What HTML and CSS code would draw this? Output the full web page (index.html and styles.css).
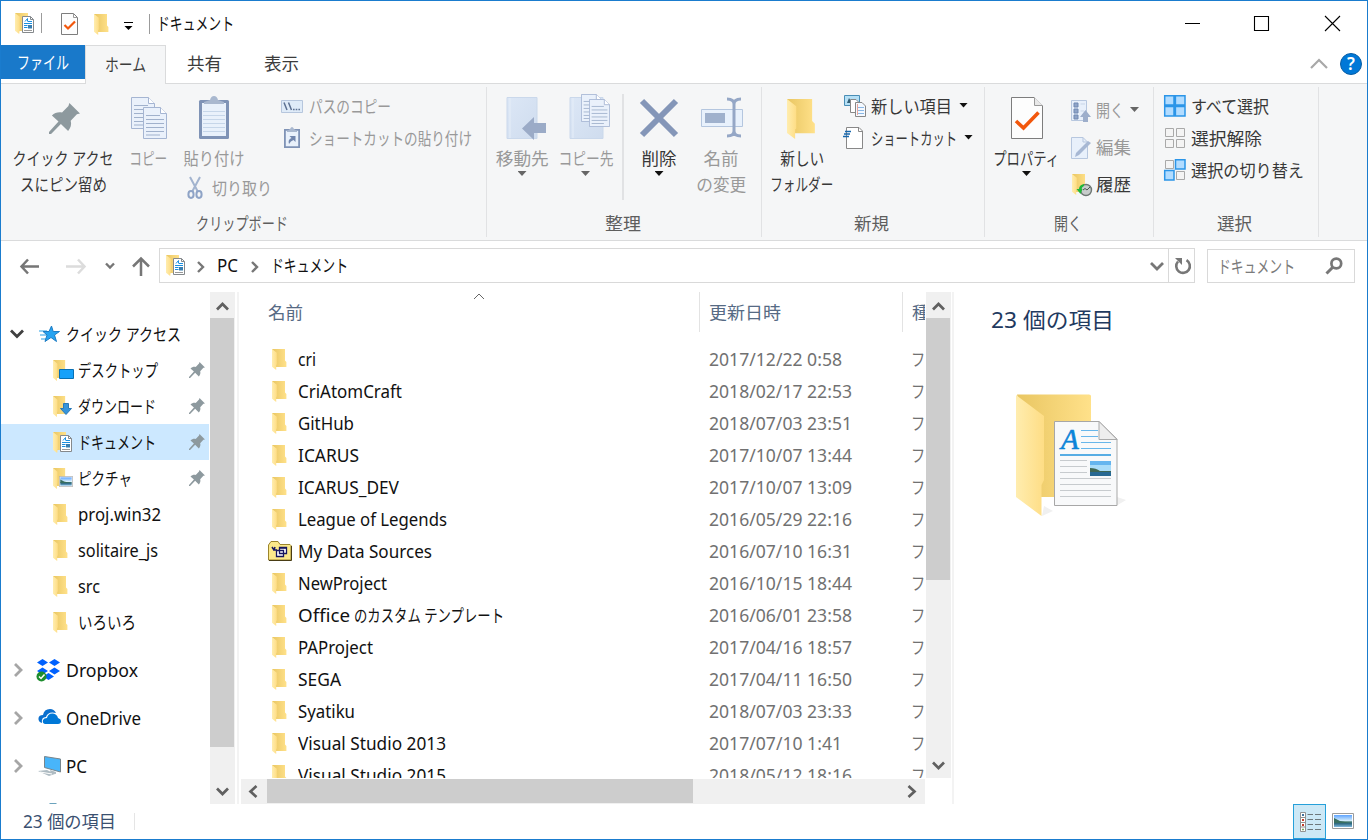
FILE: index.html
```html
<!DOCTYPE html>
<html lang="ja">
<head>
<meta charset="utf-8">
<title>ドキュメント</title>
<link rel="stylesheet" href="styles.css">
</head>
<body>
<svg class="defs" aria-hidden="true">
  <defs>
    <linearGradient id="gBack" x1="0" x2="1"><stop offset="0" stop-color="#e9c662"/><stop offset="1" stop-color="#ffe18a"/></linearGradient>
    <linearGradient id="gFlap" x1="0" x2="1"><stop offset="0" stop-color="#ffedaf"/><stop offset="1" stop-color="#fedd85"/></linearGradient>
    <linearGradient id="gSky" x1="0" x2="0" y1="0" y2="1"><stop offset="0" stop-color="#5fa4ff"/><stop offset=".5" stop-color="#d9f0fb"/><stop offset=".56" stop-color="#477d72"/><stop offset=".72" stop-color="#306a82"/><stop offset="1" stop-color="#7fb8df"/></linearGradient>
    <linearGradient id="gPale" x1="0" x2="1" y2="1"><stop offset="0" stop-color="#dce7f6"/><stop offset="1" stop-color="#cfdcee"/></linearGradient>
  </defs>
  <symbol id="folder" viewBox="0 0 15 21" preserveAspectRatio="none"><path d="M0 0H13V11.5L14.4 13V18H4Z" fill="url(#gBack)"/><path d="M0 0L4.8 3.8V15.5L4.2 16V21L0 17.8Z" fill="url(#gFlap)"/></symbol>
  <symbol id="docfolder" viewBox="0 0 20 21"><path d="M0 0H13V18H4Z" fill="url(#gBack)"/><path d="M0 0L4.8 3.8V16L4.2 21L0 17.8Z" fill="url(#gFlap)"/><path d="M7.500 3.500H15.500L18.500 6.500V19.500H7.500Z" fill="#fff" stroke="#85898c"/><path d="M15.500 3.500V6.500H18.500" fill="none" stroke="#85898c"/><path d="M10 8.500L12.500 5.500V8.500M9 10.500H17M13 8.500H17M9 12.500H12.500M9 14.500H12.500" fill="none" stroke="#1a8fe0"/><path d="M13 12H17V15.500H13Z" fill="#397eaf"/><path d="M9 17.500H17" stroke="#999"/></symbol>
  <symbol id="pin" viewBox="0 0 30 30"><path d="M19.7 0L30 10.2L27 11L21 17.2C22 21 21 24 18.5 27L11.5 20.3L2 30L0 30V28L9.2 18L2.8 12C5.5 9.6 9 8.3 12.6 9.2L18.8 3Z" fill="#8d999e"/></symbol>
  <symbol id="check" viewBox="0 0 32 42"><path d="M.5 .5H23L31.5 9V41.5H.5Z" fill="#fdfdfd" stroke="#7d7d7d"/><path d="M23.5 .5V8.5H31.5" fill="#e8e8e8" stroke="#999"/><path d="M5 24L12.5 31L27.5 15.5" fill="none" stroke="#f2570c" stroke-width="3.6"/></symbol>
  <symbol id="page" viewBox="0 0 24 32"><path d="M.5 .5H17.5L23.5 6.5V31.5H.5Z" fill="#eaf1fb" stroke="#a5b5d2"/><path d="M17.5 .5V6.5H23.5" fill="#fff" stroke="#a5b5d2"/><path d="M3 8.5H17M3 12.5H21M3 16.5H21M3 20.5H21M3 24.5H21M3 28H17" stroke="#a0b1cc"/></symbol>
  <symbol id="photo" viewBox="0 0 22 16" preserveAspectRatio="none"><path d="M.5 .5H21.5V15.5H.5Z" fill="#fff" stroke="#9b9b9b"/><path d="M2 2H20V14H2Z" fill="url(#gSky)"/><path d="M2 5L8 8L18 10H2Z" fill="#386e60"/></symbol>
</svg>

<div class="window">
  <header class="titlebar">
    <svg class="app" width="20" height="21"><use href="#docfolder"/></svg>
    <i class="rule first"></i>
    <svg class="q1" width="17" height="22" viewBox="0 0 17 22"><path d="M.5 .5H12.500L16.500 4.500V21.500H.5Z" fill="#fdfdfd" stroke="#7d7d7d"/><path d="M12.500 .5V4.500H16.500" fill="none" stroke="#999"/><path d="M3.500 12L7 15.500L14 8.500" fill="none" stroke="#f2570c" stroke-width="2.200"/></svg>
    <svg class="q2" width="15" height="21"><use href="#folder"/></svg>
    <svg class="q3" width="9" height="9" viewBox="0 0 9 9"><path d="M0 .5H9" stroke="#000"/><path d="M.5 4H8.5L4.5 8Z"/></svg>
    <i class="rule second"></i>
    <span class="fit" data-w="77">ドキュメント</span>
    <svg class="controls" width="160" height="20" viewBox="0 0 160 20"><path d="M3 10.5H18M72.5 3.5H86.5V17.5H72.5ZM143 3L158 18M158 3L143 18" fill="none" stroke="#000" stroke-width="1.1"/></svg>
  </header>

  <nav class="tabs">
    <div class="tab file"><span class="fit" data-w="52">ファイル</span></div>
    <div class="tab home"><span class="fit" data-w="41">ホーム</span></div>
    <div class="tab share"><span class="fit" data-w="35">共有</span></div>
    <div class="tab view"><span class="fit" data-w="35">表示</span></div>
    <svg class="collapse" width="18" height="12" viewBox="0 0 18 12"><path d="M1 10L9 2L17 10" fill="none" stroke="#a8a8a8" stroke-width="2.2"/></svg>
    <div class="help">?</div>
  </nav>

  <section class="ribbon">
    <div class="group clipboard">
      <div class="cells">
        <div class="big c1"><svg viewBox="0 0 48 48"><use href="#pin" x="9" y="7" width="31" height="31"/></svg>
          <span class="fit" data-w="101">クイック アクセ</span><span class="fit" data-w="87">スにピン留め</span></div>
        <div class="big c2 off"><svg viewBox="0 0 48 48"><use href="#page" x="7" y="1" width="24" height="32"/><use href="#page" x="19" y="11" width="24" height="32"/></svg><span class="fit" data-w="38">コピー</span></div>
        <div class="c3 off">
          <div class="big"><svg viewBox="0 0 48 48"><rect x="9" y="4" width="30" height="39" rx="1.5" fill="#7f93b6"/><path d="M12 7H36V40H12Z" fill="#e9f1fb"/><path d="M13 15.5H35M13 19.5H35M13 23.5H35M13 27.5H35M13 31.5H35M13 35.5H35" stroke="#c6d6e9"/><path d="M14 8V6L20 4Q21 0 24 0Q27 0 28 4L34 6V8Z" fill="#a9b8cf"/></svg><span class="fit" data-w="61">貼り付け</span></div>
          <div class="cut"><svg width="16" height="22" viewBox="0 0 16 22"><path d="M3 0L10.500 14M13 0L5.500 14" stroke="#a3b4cf" stroke-width="2"/><ellipse cx="4" cy="17.500" rx="2.600" ry="3.400" fill="none" stroke="#8ea3c6" stroke-width="2"/><ellipse cx="12" cy="17.500" rx="2.600" ry="3.400" fill="none" stroke="#8ea3c6" stroke-width="2"/></svg><span class="fit" data-w="60">切り取り</span></div>
        </div>
        <div class="stack off">
          <div class="small"><svg width="24" height="24" viewBox="0 0 24 24"><path d="M1.5 6.5H22.5V18.5H1.5Z" fill="#dfebf8" stroke="#b6c6dd"/><path d="M4 8.5L7 16M8.5 8.5L11.5 16" stroke="#5d7192" stroke-width="1.5"/><path d="M13 15.5H20" stroke="#5d7192" stroke-width="1.6" stroke-dasharray="1.6 1.1"/></svg><span class="fit" data-w="82">パスのコピー</span></div>
          <div class="small"><svg width="24" height="24" viewBox="0 0 24 24"><path d="M4.9 3.900H19.1V21.1H4.9Z" fill="#e9f1fb" stroke="#7f93b6" stroke-width="1.8"/><path d="M7 5L10 3Q12-1 14 3L17 5V6H7Z" fill="#a9b8cf"/><path d="M9 18Q7.500 13.500 11.500 12L9.500 10H15.500V16L13.500 14Q10.500 15 9 18Z" fill="#7186ad"/></svg><span class="fit" data-w="163">ショートカットの貼り付け</span></div>
        </div>
      </div>
      <div class="caption"><span class="fit" data-w="92">クリップボード</span></div>
    </div>

    <div class="group organize">
      <div class="cells">
        <div class="big move off"><svg viewBox="0 0 48 48"><path d="M9 1.5H39V42.5H9Z" fill="url(#gPale)" stroke="#cad8eb"/><path d="M12 2V42" stroke="#e6eef8"/><path d="M24 32.5L36 21V27H48V37H36V44Z" fill="#9babc7"/></svg><span class="fit" data-w="53">移動先</span><b class="arrow"></b></div>
        <div class="big copyto off"><svg viewBox="0 0 48 48"><path d="M8 1.5H41V42.5H8Z" fill="url(#gPale)" stroke="#cad8eb"/><path d="M11 2V42" stroke="#e6eef8"/><use href="#page" x="19" y="-2" width="21" height="28"/><use href="#page" x="27" y="3" width="21" height="28"/></svg><span class="fit" data-w="55">コピー先</span><b class="arrow"></b></div>
        <i class="split"></i>
        <div class="big delete"><svg viewBox="0 0 48 48"><path d="M7 5L41 39M41 5L7 39" stroke="#8496b8" stroke-width="6"/></svg><span class="fit" data-w="35">削除</span><b class="arrow"></b></div>
        <div class="big rename off"><svg viewBox="0 0 48 48"><path d="M4.5 13.5H45.5V30.5H4.5Z" fill="#e8f1fc" stroke="#b4c6df"/><path d="M8 17H28V27H8Z" fill="#9fb1cd"/><path d="M37 4V40M30 3Q37 3 37 8Q37 3 44 3M30 40Q37 40 37 35Q37 40 44 40" fill="none" stroke="#95a7c6" stroke-width="3"/></svg><span class="fit" data-w="35">名前</span><span class="fit" data-w="50">の変更</span></div>
      </div>
      <div class="caption"><span class="fit" data-w="36">整理</span></div>
    </div>

    <div class="group new">
      <div class="cells">
        <div class="big newfolder"><svg viewBox="0 0 48 48"><use href="#folder" x="9" y="3" width="29" height="40"/></svg><span class="fit" data-w="44">新しい</span><span class="fit" data-w="63">フォルダー</span></div>
        <div class="stack">
          <div class="small"><svg width="24" height="24" viewBox="0 0 24 24"><path d="M1.5 1.5H16.5V11.5H1.5Z" fill="#b5e0f6" stroke="#4a8eb6"/><path d="M4 9L6 4L9 9Z" fill="#315d75"/><path d="M7.5 5.5H13L15.5 8V18.5H7.5Z" fill="#fff" stroke="#888"/><path d="M12.5 8.5H19L22.5 12V22.5H12.5Z" fill="#f4f9ff" stroke="#888"/><path d="M14 13.5H21M14 16.5H21M14 19.5H21" stroke="#8ab7e5"/><path d="M14.5 10V21" stroke="#e8a69a"/></svg><span class="fit" data-w="81">新しい項目</span><b class="arrow"></b></div>
          <div class="small"><svg width="24" height="24" viewBox="0 0 24 24"><path d="M3.5 1.5H16L19.5 5V22.5H3.5Z" fill="#fff" stroke="#888"/><path d="M15.5 1.5V5.5H19.5" fill="none" stroke="#888"/><path d="M2 5.500H8M1 8H7M0 10.500H6" stroke="#1566ac" stroke-width="1.4"/></svg><span class="fit" data-w="86">ショートカット</span><b class="arrow"></b></div>
        </div>
      </div>
      <div class="caption"><span class="fit" data-w="35">新規</span></div>
    </div>

    <div class="group open">
      <div class="cells">
        <div class="big props"><svg viewBox="0 0 48 48"><use href="#check" x="8" y="1" width="32" height="42"/></svg><span class="fit" data-w="66">プロパティ</span><b class="arrow"></b></div>
        <div class="stack">
          <div class="small off"><svg width="22" height="24" viewBox="0 0 22 24"><path d="M1.5 1.5H16.5V21.5H1.5Z" fill="#e8f0fb" stroke="#b7c7df"/><path d="M4 4H8V8H4ZM4 10H8V14H4ZM4 16H8V20H4Z" fill="#8fa4c8" stroke="#7189b2"/><path d="M10.5 5H15M10.5 12H14" stroke="#c8d5e7"/><path d="M15.5 11L21 18H18V23H13V18H10Z" fill="#9daecb"/></svg><span class="fit" data-w="28">開く</span><b class="arrow"></b></div>
          <div class="small off"><svg width="22" height="24" viewBox="0 0 22 24"><path d="M1.5 1.5H13L17.5 6V22.5H1.5Z" fill="#e8f0fb" stroke="#b7c7df"/><path d="M13 1.5V6H17.5" fill="none" stroke="#b7c7df"/><path d="M5 21L6 17L18 5L21 7L9 19Z" fill="#a7b8d4"/></svg><span class="fit" data-w="35">編集</span></div>
          <div class="small"><svg width="22" height="24" viewBox="0 0 22 24"><use href="#folder" x="2" y="1" width="15" height="21"/><circle cx="16" cy="17" r="5.500" fill="#c7cccb" stroke="#6e7774" stroke-width="1.4"/><path d="M13 17L15 15.5L17 17L20 14" fill="none" stroke="#4d5551"/><path d="M14 11Q9 12 9 16H6.500L10.500 21L12.500 16H11.500Q12 13.500 14 13Z" fill="#21b738"/></svg><span class="fit" data-w="35">履歴</span></div>
        </div>
      </div>
      <div class="caption"><span class="fit" data-w="28">開く</span></div>
    </div>

    <div class="group select">
      <div class="cells">
        <div class="stack">
          <div class="small"><svg width="24" height="24" viewBox="0 0 24 24"><path d="M1.7 1.7H11V11H1.7ZM12.4 1.7H22V11H12.4ZM1.7 12.4H11V22H1.7ZM12.4 12.4H22V22H12.4Z" fill="#b2dcff" stroke="#2b95e8" stroke-width="1.5"/></svg><span class="fit" data-w="78">すべて選択</span></div>
          <div class="small"><svg width="24" height="24" viewBox="0 0 24 24"><path d="M2.5 2.5H10.5V10.5H2.5ZM13.5 2.5H21.5V10.5H13.5ZM2.5 13.5H10.5V21.5H2.5ZM13.5 13.5H21.5V21.5H13.5Z" fill="#f4f4f4" stroke="#a9a9a9"/></svg><span class="fit" data-w="71">選択解除</span></div>
          <div class="small"><svg width="24" height="24" viewBox="0 0 24 24"><path d="M2.5 2.5H10.5V10.5H2.5ZM13.5 13.5H21.5V21.5H13.5Z" fill="#f4f4f4" stroke="#a9a9a9"/><path d="M12.5 1.7H22V11H12.5ZM1.7 12.5H11V22H1.7Z" fill="#b2dcff" stroke="#2b95e8" stroke-width="1.5"/></svg><span class="fit" data-w="113">選択の切り替え</span></div>
        </div>
      </div>
      <div class="caption"><span class="fit" data-w="35">選択</span></div>
    </div>
  </section>

  <div class="location">
    <svg class="arrows" width="150" height="34" viewBox="0 0 150 34"><g fill="none" stroke="#767676" stroke-width="2.5"><path d="M21 18.500H39M28 11.500L21.500 18.500L28 25.500"/><path d="M66 18.500H84.500M78 11.500L84.500 18.500L78 25.500" stroke="#dcdcdc"/><path d="M106 15.500L110 19.500L114 15.500" stroke-width="2.4"/><path d="M141 28V11M133 18.500L141 10.500L149 18.500"/></g></svg>
    <div class="address">
      <svg class="aicon" width="20" height="21"><use href="#docfolder"/></svg>
      <svg class="chev s1" width="8" height="12" viewBox="0 0 8 12"><path d="M1 1L6 6L1 11" fill="none" stroke="#777" stroke-width="2.4"/></svg>
      <span class="fit" data-w="21">PC</span>
      <svg class="chev s2" width="8" height="12" viewBox="0 0 8 12"><path d="M1 1L6 6L1 11" fill="none" stroke="#777" stroke-width="2.4"/></svg>
      <span class="fit" data-w="77">ドキュメント</span>
      <svg class="drop" width="14" height="10" viewBox="0 0 14 10"><path d="M1 2L7 8L13 2" fill="none" stroke="#777" stroke-width="2.8"/></svg>
      <div class="reload"><svg width="18" height="18" viewBox="0 0 18 18"><path d="M12.500 3.200A6.800 6.800 0 1 1 4 4.500" fill="none" stroke="#777" stroke-width="2.6"/><path d="M1 1H8V8Z" fill="#777"/></svg></div>
    </div>
    <div class="search"><span class="fit" data-w="77">ドキュメント</span><svg width="18" height="18" viewBox="0 0 18 18"><circle cx="11.300" cy="6.500" r="4.900" fill="none" stroke="#777" stroke-width="2.700"/><path d="M8 10L1.500 16.500" stroke="#777" stroke-width="3"/></svg></div>
  </div>

  <main class="body">
    <aside class="tree">
      <div class="node root"><svg class="tw" width="14" height="10" viewBox="0 0 14 10"><path d="M1 1.500L7 7.500L13 1.500" fill="none" stroke="#404040" stroke-width="2.800"/></svg>
        <svg class="ni" width="24" height="20" viewBox="0 0 24 20"><path d="M0 7H8M1 11H7M2 15H7" stroke="#72c1ef" stroke-width="1.3"/><path d="M12.500 2L14.200 7.500H20.500L15.500 11L17.500 17.500L12 13.500L6 17.500L8 11L4 7.500H10Z" fill="#25a3f1" stroke="#1c7cc4"/></svg><span class="fit" data-w="115">クイック アクセス</span></div>
      <div class="node child"><svg class="ni" width="24" height="22" viewBox="0 0 24 22"><use href="#folder" x="0" y="0" width="14" height="21"/><path d="M6.500 9.500H20.500V18.500H6.500Z" fill="#16a1fa" stroke="#0870b4"/></svg><span class="fit" data-w="80">デスクトップ</span><svg class="pn" width="16" height="16"><use href="#pin"/></svg></div>
      <div class="node child"><svg class="ni" width="24" height="22" viewBox="0 0 24 22"><use href="#folder" x="0" y="0" width="14" height="21"/><path d="M10.500 7.500H15.500V12.500H18.500L13 18.500L7.500 12.500H10.500Z" fill="#3694db" stroke="#2979b7"/></svg><span class="fit" data-w="78">ダウンロード</span><svg class="pn" width="16" height="16"><use href="#pin"/></svg></div>
      <div class="node child current"><svg class="ni" width="24" height="22" viewBox="0 0 24 22"><use href="#docfolder" width="20" height="21"/></svg><span class="fit" data-w="78">ドキュメント</span><svg class="pn" width="16" height="16"><use href="#pin"/></svg></div>
      <div class="node child"><svg class="ni" width="24" height="22" viewBox="0 0 24 22"><use href="#folder" x="0" y="0" width="14" height="21"/><use href="#photo" x="6" y="8" width="14" height="11"/></svg><span class="fit" data-w="54">ピクチャ</span><svg class="pn" width="16" height="16"><use href="#pin"/></svg></div>
      <div class="node child"><svg class="ni" width="24" height="22"><use href="#folder" width="15" height="21"/></svg><span class="fit" data-w="83">proj.win32</span></div>
      <div class="node child"><svg class="ni" width="24" height="22"><use href="#folder" width="15" height="21"/></svg><span class="fit" data-w="80">solitaire_js</span></div>
      <div class="node child"><svg class="ni" width="24" height="22"><use href="#folder" width="15" height="21"/></svg><span class="fit" data-w="22">src</span></div>
      <div class="node child"><svg class="ni" width="24" height="22"><use href="#folder" width="15" height="21"/></svg><span class="fit" data-w="58">いろいろ</span></div>
      <div class="node root drive"><svg class="tw" width="14" height="14" viewBox="0 0 14 14"><path d="M2 1L8 7L2 13" fill="none" stroke="#a6a6a6" stroke-width="2.800"/></svg><svg class="ni" width="26" height="24" viewBox="0 0 26 24"><path d="M6.500 1L12 4.500L6.500 8L1 4.500ZM18.500 1L24 4.500L18.500 8L13 4.500ZM6.500 9.500L12 13L6.500 16.500L1 13ZM18.500 9.500L24 13L18.500 16.500L13 13ZM12.500 15L18 18.500L12.500 22L7 18.500Z" fill="#0061fe"/><circle cx="5.500" cy="18.500" r="5" fill="#1e8d2e"/><path d="M3 18.500L5 20.500L8.500 16.500" stroke="#fff" fill="none" stroke-width="1.500"/></svg><span class="fit" data-w="72">Dropbox</span></div>
      <div class="node root drive"><svg class="tw" width="14" height="14" viewBox="0 0 14 14"><path d="M2 1L8 7L2 13" fill="none" stroke="#a6a6a6" stroke-width="2.800"/></svg><svg class="ni" width="26" height="24" viewBox="0 0 26 24"><path d="M6 17Q2 16 2.500 12Q3 9 7 9Q8 3 14 3Q18 3 20 7Q12 5 10 11Q5 11 6 17Z" fill="#0a6fce"/><path d="M9 18Q6 17 7 14Q8 12 11 12Q12 7 17 7.500Q21 8 22 12Q25 13 25 15Q25 18 22 18Z" fill="#0078d7"/></svg><span class="fit" data-w="75">OneDrive</span></div>
      <div class="node root drive"><svg class="tw" width="14" height="14" viewBox="0 0 14 14"><path d="M2 1L8 7L2 13" fill="none" stroke="#a6a6a6" stroke-width="2.800"/></svg><svg class="ni" width="26" height="24" viewBox="0 0 26 24"><path d="M8.500 2.500L24.500 5V18L8.500 13.500Z" fill="#48b5fa" stroke="#77858d"/><path d="M14 16L20 18V20L15 19ZM2 17L11 16L19 20L13 22Z" fill="#aebbc2"/><path d="M4 18L16 20" stroke="#fff"/></svg><span class="fit" data-w="21">PC</span></div>
      <div class="node root drive more"><svg class="ni" width="26" height="24" viewBox="0 0 26 24"><path d="M12 1H18L20 3H10Z" fill="#6ba3bd"/></svg></div>
    </aside>
    <div class="vbar treebar"><svg class="up" viewBox="0 0 25 26"><path d="M7 17.500L12.500 12L18 17.500" /></svg><div class="thumb"></div><svg class="down" viewBox="0 0 25 26"><path d="M7 10.500L12.500 16L18 10.500"/></svg></div>
    <i class="divider d1"></i>
    <section class="files">
      <div class="pane">
        <div class="listing">
          <div class="cols"><span class="col name"><span class="fit" data-w="35">名前</span><svg class="sort" width="12" height="7" viewBox="0 0 12 7"><path d="M1 6L6 1L11 6" fill="none" stroke="#666"/></svg></span><span class="col date"><span class="fit" data-w="72">更新日時</span></span><span class="col kind"><span class="fit" data-w="35">種類</span></span></div>
          <div class="rows"></div>
        </div>
        <div class="vbar filebar"><svg class="up" viewBox="0 0 25 26"><path d="M7 17.500L12.500 12L18 17.500"/></svg><div class="thumb"></div><svg class="down" viewBox="0 0 25 26"><path d="M7 10.500L12.500 16L18 10.500"/></svg></div>
      </div>
      <div class="hbar"><svg viewBox="0 0 26 25"><path d="M15.500 7L9.500 12.500L15.500 18"/></svg><div class="thumb"></div><svg class="right" viewBox="0 0 26 25"><path d="M9.500 7L15.500 12.500L9.500 18"/></svg></div>
    </section>
    <i class="divider d2"></i>
    <section class="preview">
      <div class="count"><span class="fit" data-w="123">23 個の項目</span></div>
      <svg class="art" width="115" height="126" viewBox="0 0 115 126">
        <path d="M26 122L37 117L28 112ZM100 112L110 106L101 103Z" fill="#f0f0f0"/>
        <path d="M1 .5H73Q75 .5 75 2V103H24Z" fill="url(#gBack)"/><path d="M0 1L28 22V86L25.500 91V122L0 103Z" fill="url(#gFlap)"/>
        <path d="M38.500 27.500H83L101 45V111.500H38.500Z" fill="#f8f9fa" stroke="#a7a7a7"/><path d="M83 27.500V45.500H101Z" fill="#eee" stroke="#aaa"/>
        <text x="45" y="54.500" class="letter">A</text>
        <path d="M65 36.500H82M65 42.500H82M65 48.500H95M65 54.500H95" stroke="#67b6ea"/><path d="M44 61H95" stroke="#2293dc" stroke-width="1.600"/>
        <path d="M44 66.500H71M44 72.500H71M44 78.500H71M44 84.500H95M44 90.500H95M44 96.500H95M44 102.500H95" stroke="#c7cbce"/>
        <path d="M74 67H95V82H74Z" fill="#a9dcf9"/><path d="M74 67H95V71H74Z" fill="#65b5ef"/><path d="M74 74Q80 74 84 77L95 77V79H74Z" fill="#3e6653"/><path d="M74 78H95V82H74Z" fill="#286993"/>
      </svg>
    </section>
  </main>

  <footer class="status"><span class="fit" data-w="93">23 個の項目</span><i class="mark"></i>
    <div class="view on"><svg width="22" height="22" viewBox="0 0 22 22"><path d="M.5 1.500H5.500V20.500H.5ZM.5 6.500H5.500M.5 11.500H5.500M.5 16H5.500" fill="#fff" stroke="#929292"/><path d="M2 4H4" stroke="#3f719e" stroke-width="2"/><path d="M2 9H4M2 14H4" stroke="#c43b27" stroke-width="2"/><path d="M2 18.500H4" stroke="#78a65d" stroke-width="1.500"/><path d="M7.500 3.500H13M15 3.500H21M7.500 8.500H13M15 8.500H21M7.500 13.500H13M15 13.500H21M7.500 18.500H13M15 18.500H21" stroke="#6d777b"/></svg></div>
    <svg class="thumbs" width="22" height="16"><use href="#photo"/></svg>
  </footer>
</div>
<script src="app.js"></script>
</body>
</html>
```

FILE: styles.css
```css
* { box-sizing: border-box; }
body { margin: 0; background: #fff; color: #111; font: 17.5px/26px "Noto Sans", "Noto Sans CJK JP", sans-serif; overflow: hidden; }
svg { display: block; flex: none; overflow: visible; }
.defs { position: absolute; width: 0; height: 0; }
.fit { display: inline-block; white-space: nowrap; transform-origin: 0 50%; flex: none; }
.window { width: 1368px; height: 840px; border: 1px solid #1a7cce; display: flex; flex-direction: column; }

.titlebar { height: 44px; display: flex; align-items: center; padding-left: 14px; flex: none; }
.rule { width: 1px; height: 20px; background: #9b9b9b; }
.rule.first { margin-left: 6px; }
.q1 { margin: 2px 0 0 19px; }
.q2 { margin: 2px 0 0 16px; }
.q3 { margin: 7px 0 0 15px; }
.rule.second { margin: 2px 7px 0 16px; }
.controls { margin: -1px 25px 0 auto; }

.tabs { height: 39px; display: flex; flex: none; border-bottom: 1px solid #dadbdc; line-height: 37px; color: #3c3c3c; }
.tab.file { width: 84px; height: 34px; background: #1979ca; color: #fff; padding-left: 16px; line-height: 35px; }
.tab.home { width: 81px; height: 39px; background: #f5f6f7; border: 1px solid #dadbdc; border-bottom: 0; padding-left: 19px; line-height: 36px; }
.tab.share { padding-left: 21px; }
.tab.view { padding-left: 42px; }
.collapse { margin: 13px 0 0 auto; }
.help { width: 22px; height: 22px; border-radius: 50%; background: #0078d7; border: 1px solid #075da5; color: #fff; margin: 8px 5px 0 12px; text-align: center; line-height: 20px; font-size: 17px; font-weight: 600; }

.ribbon { height: 157px; background: #f5f6f7; border-bottom: 1px solid #dadbdc; display: flex; padding: 3px 0; flex: none; color: #383838; }
.group { height: 150px; border-right: 1px solid #e1e2e4; flex: none; }
.cells { height: 124px; display: flex; }
.caption { text-align: center; color: #5e5e5e; padding-right: 3px; line-height: 25px; }
.clipboard { width: 486px; }
.organize { width: 275px; }
.new { width: 223px; }
.open { width: 169px; }
.select { width: 165px; }
.big { display: flex; flex-direction: column; align-items: center; padding-top: 9px; flex: none; }
.big > svg { width: 48px; height: 48px; margin-bottom: 1px; }
.off { color: #999; }
.arrow { width: 9px; height: 5px; background: #111; clip-path: polygon(0 0, 100% 0, 50% 100%); flex: none; }
.off .arrow { background: #666; }
.c1 { width: 125px; }
.c2 { width: 44px; }
.c3 { width: 110px; }
.c3 .big { width: 87px; }
.cut { display: flex; align-items: center; gap: 9px; padding-left: 17px; margin-top: 4px; }
.stack { display: flex; flex-direction: column; padding-top: 3px; }
.small { height: 32px; display: flex; align-items: center; gap: 4px; line-height: 26px; }
.small .fit { margin-top: -1px; }
.clipboard .small { gap: 5px; }
.small .arrow { margin-left: 3px; margin-bottom: 2px; }
.move { width: 70px; }
.copyto { width: 55px; margin-left: 1px; }
.split { width: 2px; height: 106px; margin: 7px 0 0 9px; background: #e1e2e4; }
.delete { width: 70px; }
.rename { width: 54px; }
.newfolder { width: 80px; }
.new .stack { padding-left: 1px; }
.props { width: 83px; }
.open .stack { padding: 5px 0 0 2px; }
.open .small { height: 37px; gap: 4px; }
.open .small .arrow { margin-left: 2px; }
.select .stack { padding-left: 9px; }

.location { height: 51px; display: flex; padding-top: 7px; flex: none; }
.arrows { margin-left: -1px; margin-right: 9px; }
.address { width: 1036px; height: 35px; border: 1px solid #d9d9d9; display: flex; align-items: center; padding-left: 6px; flex: none; }
.address .fit { margin-top: -1px; }
.s1 { margin: 2px 12px 0 11px; }
.s2 { margin: 2px 12px 0 13px; }
.drop { margin-left: auto; margin-right: 4px; }
.reload { width: 26px; height: 33px; border-left: 1px solid #d9d9d9; padding: 8px 0 0 5px; }
.search { width: 148px; height: 34px; border: 1px solid #d9d9d9; margin: 1px 0 0 12px; display: flex; align-items: center; justify-content: space-between; padding: 0 11px 0 10px; color: #7b7b7b; }

.body { height: 512px; display: flex; flex: none; }
.tree { width: 208px; height: 512px; overflow: hidden; padding-top: 24px; flex: none; }
.node { height: 36px; display: flex; align-items: center; padding-left: 9px; }
.node .tw { width: 14px; margin-right: 15px; }
.node .ni { margin-right: 1px; }
.root .ni { width: 24px; margin-right: 3px; }
.child { padding-left: 52px; }
.child .ni { margin-top: 1px; }
.child.current { background: #cce8ff; }
.pn { margin: 0 4px 0 auto; }
.drive { margin-top: 12px; }
.drive .tw { margin-right: 9px; margin-left: 3px; }
.drive .ni { width: 26px; margin-right: 4px; }
.more { padding-left: 37px; }

.vbar { width: 25px; background: #f0f0f0; display: flex; flex-direction: column; flex: none; }
.vbar svg { width: 25px; height: 26px; }
.vbar path, .hbar path { fill: none; stroke: #606060; stroke-width: 2.7; }
.vbar .down { margin-top: auto; }
.thumb { background: #cdcdcd; flex: none; }
.vbar .thumb { width: 24px; }
.treebar { margin-left: 1px; height: 512px; }
.treebar .thumb { height: 429px; }
.divider { width: 2px; height: 512px; background: #f3f3f3; flex: none; }
.d1 { margin: 0 2px; }
.d2 { margin-left: 1px; }
.files { width: 710px; height: 512px; flex: none; }
.pane { height: 486px; display: flex; }
.listing { width: 684px; height: 486px; overflow: hidden; margin-right: 1px; flex: none; }
.cols { display: flex; height: 40px; color: #566a84; }
.col { border-right: 1px solid #e3e3e3; height: 40px; line-height: 41px; flex: none; position: relative; }
.col.name { width: 459px; padding-left: 27px; }
.sort { position: absolute; left: 232px; top: 1px; }
.col.date { width: 203px; padding-left: 9px; }
.col.kind { width: 50px; padding-left: 9px; border: 0; }
.rows { padding-top: 11px; }
.row { display: flex; height: 32px; align-items: center; color: #717171; }
.row .icon { width: 57px; padding-left: 31px; flex: none; }
.row .icon.data { padding-left: 27px; }
.row .title { width: 411px; color: #111; flex: none; line-height: 32px; display: flex; gap: 4px; }
.row .when { width: 202px; flex: none; line-height: 32px; }
.row .kind-name { line-height: 32px; }
.filebar { height: 486px; }
.filebar .thumb { height: 262px; }
.hbar { width: 684px; height: 25px; margin-top: 1px; background: #f0f0f0; display: flex; }
.hbar svg { width: 26px; height: 25px; }
.hbar .thumb { width: 426px; height: 24px; }
.hbar .right { margin-left: auto; }
.preview { padding: 14px 0 0 37px; color: #1f3a5f; }
.count { font-size: 22px; line-height: 26px; }
.art { margin: 62px 0 0 25px; }
.letter { font: italic 400 29px "Liberation Serif", serif; fill: #0b84d8; stroke: #0b84d8; stroke-width: .6px; }

.status { height: 34px; display: flex; align-items: center; padding-left: 22px; color: #3a5070; flex: none; }
.mark { width: 1px; height: 17px; background: #e5e5e5; margin-left: 18px; }
.view.on { width: 33px; height: 35px; background: #cce8f6; border: 1px solid #26a0da; margin-left: auto; padding: 6px 0 0 6px; }
.thumbs { margin: 0 13px 0 6px; }
```

FILE: app.js
```js
const files = [
  ["cri", 18, "2017/12/22 0:58", 133],
  ["CriAtomCraft", 104, "2018/02/17 22:53", 143],
  ["GitHub", 56, "2018/07/03 23:51", 143],
  ["ICARUS", 61, "2017/10/07 13:44", 143],
  ["ICARUS_DEV", 101, "2017/10/07 13:09", 143],
  ["League of Legends", 149, "2016/05/29 22:16", 143],
  ["My Data Sources", 134, "2016/07/10 16:31", 143],
  ["NewProject", 89, "2016/10/15 18:44", 143],
  ["Office|のカスタム テンプレート", "52|150", "2016/06/01 23:58", 143],
  ["PAProject", 75, "2017/04/16 18:57", 143],
  ["SEGA", 43, "2017/04/11 16:50", 143],
  ["Syatiku", 57, "2018/07/03 23:33", 143],
  ["Visual Studio 2013", 148, "2017/07/10 1:41", 133],
  ["Visual Studio 2015", 148, "2018/05/12 18:16", 143]
];

const folderIcon = '<span class="icon"><svg width="15" height="21"><use href="#folder"/></svg></span>';
const dataIcon = '<span class="icon data"><svg width="24" height="21" viewBox="0 0 24 21"><path d="M.5 19V4L3 .5H10L12 3.500H22L23 4.500V19Z" fill="#fbe98a" stroke="#9c852c"/><path d="M1 19.500H23.500V5" fill="none" stroke="#493c14"/><path d="M8.500 9.500H15.500V15.500H8.500ZM11.500 6.500H18.500V12.500H11.500Z" fill="#fff" stroke="#17175f" stroke-width="1.300"/><path d="M11 7H19M4 6L6 9M7 6L6 9H9" fill="none" stroke="#17175f" stroke-width="1.500"/></svg></span>';

// A name in mixed scripts is split at "|", with one width for each part.
const title = (name, widths) => {
  const parts = String(widths).split("|");
  return name.split("|").map((text, i) => `<span class="fit" data-w="${parts[i]}">${text}</span>`).join("");
};

document.querySelector(".rows").innerHTML = files.map(([name, nameWidth, date, dateWidth]) =>
  `<div class="row">${name === "My Data Sources" ? dataIcon : folderIcon}` +
  `<span class="title">${title(name, nameWidth)}</span>` +
  `<span class="when"><span class="fit" data-w="${dateWidth}">${date}</span></span>` +
  `<span class="kind-name"><span class="fit" data-w="132">ファイル フォルダー</span></span></div>`).join("");

// Condense each label to its set width and keep that width in the flow.
for (const el of document.querySelectorAll(".fit")) {
  const natural = el.getBoundingClientRect().width;
  const target = Number(el.dataset.w);
  const parent = getComputedStyle(el.parentElement);
  if (parent.alignItems === "center" && parent.flexDirection === "column") {
    el.style.transformOrigin = "50% 50%";
  } else {
    el.style.marginRight = `${target - natural}px`;
  }
  el.style.transform = `scaleX(${target / natural})`;
}
```
